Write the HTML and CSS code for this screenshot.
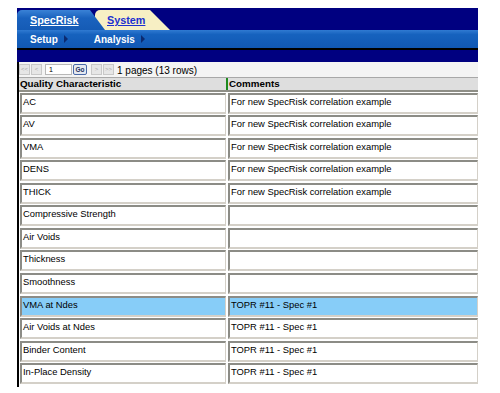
FILE: index.html
```html
<!DOCTYPE html>
<html lang="en">
<head>
<meta charset="UTF-8">
<title>SpecRisk - Quality Characteristics</title>
<link rel="stylesheet" href="styles.css">
</head>
<body>
<div class="app">
  <div class="tabbar">
    <a href="#" class="tab tab-active">SpecRisk</a>
    <a href="#" class="tab tab-other">System</a>
  </div>
  <div class="menubar">
    <span class="menu-item">Setup<i class="arrow"></i></span>
    <span class="menu-item">Analysis<i class="arrow"></i></span>
  </div>
  <div class="band"></div>

  <div class="pager">
    <span class="pg-btn">&lt;&lt;</span>
    <span class="pg-btn">&lt;</span>
    <span class="pg-input">1</span>
    <span class="pg-go">Go</span>
    <span class="pg-btn pg-next">&gt;</span>
    <span class="pg-btn">&gt;&gt;</span>
    <span class="pg-info">1 pages (13 rows)</span>
  </div>

  <div class="grid">
    <div class="grid-head">
      <div class="th">Quality Characteristic</div>
      <div class="th th-comments">Comments</div>
    </div>
    <div class="row"><div class="cell">AC</div><div class="cell">For new SpecRisk correlation example</div></div>
    <div class="row"><div class="cell">AV</div><div class="cell">For new SpecRisk correlation example</div></div>
    <div class="row"><div class="cell">VMA</div><div class="cell">For new SpecRisk correlation example</div></div>
    <div class="row"><div class="cell">DENS</div><div class="cell">For new SpecRisk correlation example</div></div>
    <div class="row"><div class="cell">THICK</div><div class="cell">For new SpecRisk correlation example</div></div>
    <div class="row"><div class="cell">Compressive Strength</div><div class="cell"></div></div>
    <div class="row"><div class="cell">Air Voids</div><div class="cell"></div></div>
    <div class="row"><div class="cell">Thickness</div><div class="cell"></div></div>
    <div class="row"><div class="cell">Smoothness</div><div class="cell"></div></div>
    <div class="row row-selected"><div class="cell">VMA at Ndes</div><div class="cell">TOPR #11 - Spec #1</div></div>
    <div class="row"><div class="cell">Air Voids at Ndes</div><div class="cell">TOPR #11 - Spec #1</div></div>
    <div class="row"><div class="cell">Binder Content</div><div class="cell">TOPR #11 - Spec #1</div></div>
    <div class="row"><div class="cell">In-Place Density</div><div class="cell">TOPR #11 - Spec #1</div></div>
  </div>
</div>
</body>
</html>
```

FILE: styles.css
```css
body {
  margin: 0;
  padding: 0;
  background: #fff;
  font-family: "Liberation Sans", Arial, sans-serif;
}
.app {
  margin: 8px 0 0 17px;
  width: 461px;
}

/* tabs */
.tabbar {
  height: 22px;
  background-color: #000080;
  display: flex;
  align-items: flex-end;
}
.tab {
  height: 20px;
  box-sizing: border-box;
  font-size: 10.8px;
  font-weight: bold;
  line-height: 20px;
  text-decoration: underline;
  border-radius: 5px 0 0 0;
}
.tab-active {
  position: relative;
  z-index: 2;
  width: 88px;
  padding-left: 13px;
  color: #fff;
  background: linear-gradient(#3a82d6, #1a62be 40%, #155bb5);
  clip-path: polygon(0 0, 73px 0, 88px 100%, 0 100%);
}
.tab-other {
  width: 75px;
  margin-left: -10px;
  padding-left: 12px;
  color: #1c2fd0;
  background: #f7efc4;
  clip-path: polygon(0 0, 55px 0, 75px 100%, 0 100%);
}

/* menu */
.menubar {
  height: 18px;
  background: linear-gradient(#2f7ad2, #1662be 25%, #1158b4);
  border-bottom: 2px solid #000;
  display: flex;
  align-items: center;
  padding-left: 13px;
  gap: 26px;
}
.menu-item {
  color: #fff;
  font-size: 10px;
  font-weight: bold;
  display: flex;
  align-items: center;
}
.arrow {
  display: inline-block;
  margin-left: 6px;
  border-left: 4px solid #0b2a70;
  border-top: 4px solid transparent;
  border-bottom: 4px solid transparent;
}
.band {
  height: 12px;
  background-color: #000080;
}

/* pager */
.pager {
  height: 15px;
  background: #f4f4f4;
  border-left: 2px solid #000;
  display: flex;
  align-items: center;
  gap: 1px;
}
.pg-btn {
  width: 9px;
  height: 9px;
  border: 1px solid #c8c8c8;
  background: #e6e6e6;
  color: #a8a8a8;
  font-size: 6px;
  line-height: 9px;
  text-align: center;
  overflow: hidden;
}
.pg-input {
  width: 22px;
  height: 9px;
  margin-left: 2px;
  border: 1px solid #b8b8b8;
  background: #fff;
  font-size: 7px;
  line-height: 9px;
  padding-left: 3px;
}
.pg-go {
  width: 12px;
  height: 9px;
  border: 1px solid #4a6aa8;
  border-radius: 2px;
  background: #e4e8f0;
  color: #203060;
  font-size: 6.5px;
  font-weight: bold;
  line-height: 9px;
  text-align: center;
}
.pg-next {
  margin-left: 3px;
}
.pg-info {
  margin-left: 2px;
  font-size: 10px;
  line-height: 15px;
  padding-top: 1px;
  color: #000;
}

/* grid */
.grid {
  border-left: 2px solid #000;
  padding-bottom: 1px;
}
.grid-head {
  height: 12px;
  background: #dedede;
  border-top: 1px solid #a8a8a8;
  border-bottom: 2px solid #8e8e86;
  display: grid;
  grid-template-columns: 207px 1fr;
  margin-bottom: 0.6px;
}
.th {
  font-size: 9.8px;
  font-weight: bold;
  line-height: 12px;
  padding-left: 1px;
  color: #000;
}
.th-comments {
  border-left: 2px solid #1e8a1e;
  padding-left: 1px;
}
.row {
  display: grid;
  grid-template-columns: 206px 1fr;
  column-gap: 2px;
  padding-left: 1px;
  height: 22.55px;
}
.cell {
  height: 21px;
  box-sizing: border-box;
  background: #fff;
  border-top: 2px solid #8c8c86;
  border-left: 2px solid #8c8c86;
  border-bottom: 2px solid #d4d0c8;
  border-right: 1px solid #d4d0c8;
  font-size: 9.4px;
  line-height: 14px;
  padding-left: 1px;
  color: #000;
  white-space: nowrap;
  overflow: hidden;
}
.row-selected .cell {
  background: #87cdf8;
}
```
